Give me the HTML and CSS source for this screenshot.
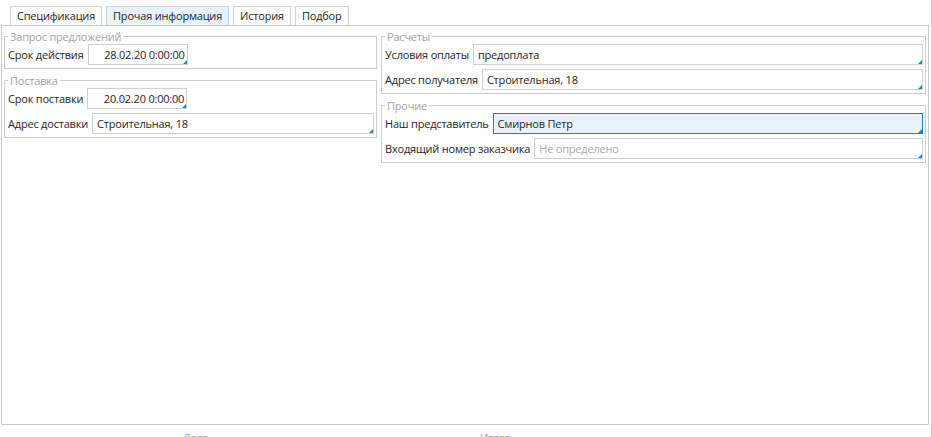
FILE: index.html
```html
<!DOCTYPE html>
<html lang="ru">
<head>
<meta charset="utf-8">
<title>Прочая информация</title>
<link rel="stylesheet" href="styles.css">
</head>
<body>
<div class="window">
  <div class="tabs">
    <div class="tab">Спецификация</div>
    <div class="tab tab-active">Прочая информация</div>
    <div class="tab">История</div>
    <div class="tab">Подбор</div>
  </div>
  <div class="panel">
    <div class="column">
      <fieldset class="group">
        <legend>Запрос предложений</legend>
        <div class="row">
          <span class="label">Срок действия</span>
          <div class="field field-date">28.02.20 0:00:00</div>
        </div>
      </fieldset>
      <fieldset class="group">
        <legend>Поставка</legend>
        <div class="row">
          <span class="label">Срок поставки</span>
          <div class="field field-date">20.02.20 0:00:00</div>
        </div>
        <div class="row">
          <span class="label">Адрес доставки</span>
          <div class="field field-wide">Строительная, 18</div>
        </div>
      </fieldset>
    </div>
    <div class="column">
      <fieldset class="group">
        <legend>Расчеты</legend>
        <div class="row">
          <span class="label">Условия оплаты</span>
          <div class="field field-wide">предоплата</div>
        </div>
        <div class="row">
          <span class="label">Адрес получателя</span>
          <div class="field field-wide">Строительная, 18</div>
        </div>
      </fieldset>
      <fieldset class="group">
        <legend>Прочие</legend>
        <div class="row">
          <span class="label">Наш представитель</span>
          <div class="field field-wide field-focus">Смирнов Петр</div>
        </div>
        <div class="row">
          <span class="label">Входящий номер заказчика</span>
          <div class="field field-wide field-empty">Не определено</div>
        </div>
      </fieldset>
    </div>
  </div>
  <div class="footer">
    <span class="footer-item footer-debt">Долг</span>
    <span class="footer-item">Итого</span>
  </div>
</div>
</body>
</html>
```
FILE: styles.css
```css
html, body {
  margin: 0;
  padding: 0;
  background: #ffffff;
}

body {
  font-family: "Open Sans", "Noto Sans", sans-serif;
  font-size: 11px;
  letter-spacing: -0.2px;
  color: #1e1e1e;
}

.window {
  width: 931px;
  height: 437px;
  border-right: 1px solid #cfcfcf;
  overflow: hidden;
}

.tabs {
  display: flex;
  gap: 4px;
  padding: 6px 0 0 10px;
  height: 19px;
}

.tab {
  box-sizing: border-box;
  height: 19px;
  line-height: 18px;
  padding: 0 6px;
  border: 1px solid #d2d2d2;
  border-bottom: none;
  background: #ffffff;
  color: #1e1e1e;
}

.tab-active {
  background: #e8f2f9;
}

.panel {
  box-sizing: border-box;
  margin-left: 1px;
  width: 928px;
  height: 400px;
  border: 1px solid #c9c9c9;
  padding: 4px 2px 0 2px;
  display: grid;
  grid-template-columns: 373px 545px;
  column-gap: 4px;
  align-items: start;
}

.column {
  display: flex;
  flex-direction: column;
  gap: 5px;
}

.group {
  margin: 0;
  min-width: 0;
  border: 1px solid #cdcdcd;
  padding: 1px 2px 3px 3px;
  display: flex;
  flex-direction: column;
  gap: 4px;
}

.group legend {
  padding: 0 2px;
  line-height: 13px;
  color: #a3a3a3;
}

.row {
  display: flex;
  align-items: center;
  gap: 4px;
}

.label {
  white-space: nowrap;
}

.field {
  position: relative;
  box-sizing: border-box;
  height: 21px;
  line-height: 19px;
  border: 1px solid #cfcfcf;
  background: #ffffff;
  padding: 0 4px;
  white-space: nowrap;
}

.field::after {
  content: "";
  position: absolute;
  right: 0;
  bottom: 0;
  width: 0;
  height: 0;
  border-left: 4px solid transparent;
  border-bottom: 4px solid #1688c4;
}

.field-date {
  width: 100px;
  text-align: right;
  padding-right: 2px;
}

.field-wide {
  flex: 1;
}

.field-focus {
  border-color: #1187be;
  background: #e8f3f9;
}

.field-empty {
  color: #a9a9a9;
}

.footer {
  display: flex;
  padding: 5px 0 0 183px;
  color: #a0a0a0;
}

.footer-debt {
  width: 297px;
}
```
